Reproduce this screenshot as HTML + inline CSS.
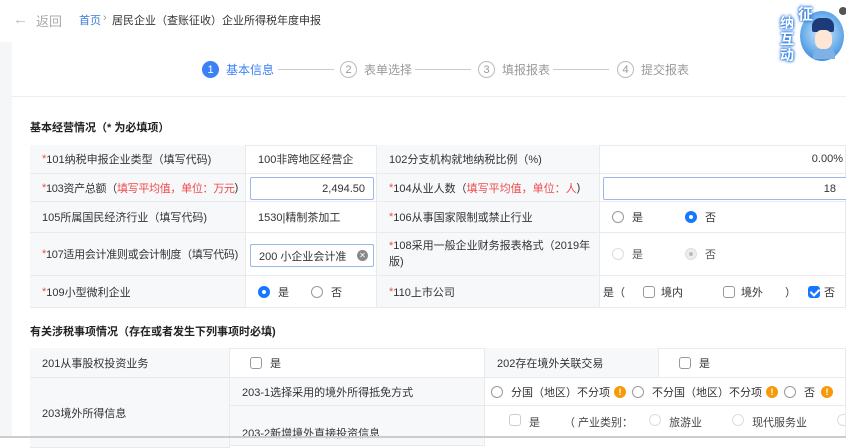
<!DOCTYPE html>
<html><head><meta charset="utf-8"><style>
*{margin:0;padding:0;box-sizing:border-box}
body{width:846px;height:438px;overflow:hidden;background:#fff;font-family:"Liberation Sans","Noto Sans CJK SC",sans-serif;font-size:12px;color:#333;position:relative}
.a{position:absolute}
.c{position:absolute;border-right:1px solid #e8eaed;border-bottom:1px solid #e8eaed;display:flex;align-items:center;padding-left:12px;font-size:11px;color:#333;white-space:nowrap;overflow:hidden}
.l{background:#f7f8fa}
.r{color:#f04a4a}
.rad,.cb,.warn{flex-shrink:0}
.rad{display:inline-block;width:12px;height:12px;border:1px solid #999;border-radius:50%;vertical-align:middle;margin-right:8px;position:relative}
.rad.on{border:4px solid #1677ff;background:#fff}
.rad.dis{border-color:#ddd}
.rad.disOn{border-color:#ddd;background:#eee}
.rad.disOn:after{content:"";position:absolute;left:3px;top:3px;width:4px;height:4px;border-radius:50%;background:#bbb}
.cb{display:inline-block;width:12px;height:12px;border:1px solid #999;border-radius:3px;vertical-align:middle;margin-right:8px}
.cb.dis{border-color:#ccc}
.cb.on{background:#1677ff;border-color:#1677ff;position:relative}
.cb.on:after{content:"";position:absolute;left:3px;top:0px;width:4px;height:7px;border:solid #fff;border-width:0 2px 2px 0;transform:rotate(45deg)}
.warn{display:inline-block;width:12px;height:12px;border-radius:50%;background:#f59a0b;color:#fff;font-size:9px;font-weight:bold;text-align:center;line-height:12px;vertical-align:middle}
.step{position:absolute;top:61px;font-size:12px;color:#999;display:flex;align-items:center}
.num{width:17px;height:17px;border-radius:50%;border:1px solid #bbb;color:#999;font-size:11px;display:flex;align-items:center;justify-content:center;margin-right:7px}
.line{position:absolute;top:69px;height:1px;background:#ccc}
.inp{position:absolute;border:1px solid #9ab8e8;border-radius:2px;height:23px;background:#fff;font-size:11px;display:flex;align-items:center}
</style></head><body>
<div class="a" style="left:0;top:42px;width:12px;height:396px;background:#f5f6f8"></div>
<div class="a" style="left:12px;top:96px;width:834px;height:1px;background:#eceef0"></div>
<!-- header -->
<div class="a" style="left:13px;top:11px;font-size:15px;color:#bbb">←</div>
<div class="a" style="left:36px;top:11px;font-size:13px;color:#aaa">返回</div>
<div class="a" style="left:79px;top:12px;font-size:11px;color:#3a7bd5">首页</div>
<div class="a" style="left:103px;top:12px;font-size:11px;color:#999">›</div>
<div class="a" style="left:112px;top:12px;font-size:11px;color:#333">居民企业（查账征收）企业所得税年度申报</div>
<!-- avatar -->
<div class="a" style="left:800px;top:11px;width:44px;height:50px;border-radius:50%;background:radial-gradient(circle at 50% 45%,#d6eeff,#3a8fe0 80%);"></div>
<div class="a" style="left:812px;top:18px;width:22px;height:14px;background:#1d3b7a;border-radius:8px 8px 2px 2px"></div>
<div class="a" style="left:815px;top:30px;width:17px;height:19px;background:#fde7d4;border-radius:40%"></div>
<div class="a" style="left:813px;top:49px;width:22px;height:10px;background:#7fb0e6;border-radius:6px 6px 0 0"></div>
<div class="a" style="left:798px;top:3px;color:#fff;font-size:15px;font-weight:bold;text-shadow:0 0 3px #2a7be0,0 0 3px #2a7be0,0 0 2px #2a7be0">征</div>
<div class="a" style="left:780px;top:15px;color:#fff;font-size:14px;font-weight:bold;line-height:16px;width:16px;text-shadow:0 0 3px #2a7be0,0 0 3px #2a7be0,0 0 2px #2a7be0">纳<br>互<br>动</div>
<div class="a" style="left:839px;top:7px;width:8px;height:8px;border-radius:50%;background:#555"></div>
<!-- steps -->
<div class="step" style="left:202px"><div class="num" style="background:#3b82f6;border-color:#3b82f6;color:#fff">1</div><span style="color:#3b82f6">基本信息</span></div>
<div class="line" style="left:278px;width:56px"></div>
<div class="step" style="left:340px"><div class="num">2</div>表单选择</div>
<div class="line" style="left:415px;width:56px"></div>
<div class="step" style="left:478px"><div class="num">3</div>填报报表</div>
<div class="line" style="left:553px;width:56px"></div>
<div class="step" style="left:617px"><div class="num">4</div>提交报表</div>
<div class="a" style="left:30px;top:119px;font-size:11px;font-weight:bold;color:#222">基本经营情况（* 为必填项）</div>
<!-- table1 -->
<div class="a" style="left:30px;top:145px;width:816px;height:163px;border-top:1px solid #e8eaed;border-left:1px solid #e8eaed"></div>
<div class="c l" style="left:30px;top:145px;width:216px;height:29px"><span class="r">*</span>101纳税申报企业类型（填写代码)</div>
<div class="c" style="left:246px;top:145px;width:131px;height:29px">100非跨地区经营企</div>
<div class="c l" style="left:377px;top:145px;width:223px;height:29px">102分支机构就地纳税比例（%)</div>
<div class="c" style="left:600px;top:145px;width:246px;height:29px;justify-content:flex-end;padding-right:2px">0.00%</div>

<div class="c l" style="left:30px;top:174px;width:216px;height:28px;letter-spacing:-0.3px"><span class="r">*</span>103资产总额（<span class="r">填写平均值，单位：万元</span>)</div>
<div class="c" style="left:246px;top:174px;width:131px;height:28px"></div>
<div class="inp" style="left:250px;top:177px;width:124px;justify-content:flex-end;padding-right:8px">2,494.50</div>
<div class="c l" style="left:377px;top:174px;width:223px;height:28px"><span class="r">*</span>104从业人数（<span class="r">填写平均值，单位：人</span>)</div>
<div class="c" style="left:600px;top:174px;width:246px;height:28px"></div>
<div class="inp" style="left:603px;top:177px;width:250px;justify-content:flex-end;padding-right:16px">18</div>

<div class="c l" style="left:30px;top:202px;width:216px;height:31px">105所属国民经济行业（填写代码)</div>
<div class="c" style="left:246px;top:202px;width:131px;height:31px">1530|精制茶加工</div>
<div class="c l" style="left:377px;top:202px;width:223px;height:31px"><span class="r">*</span>106从事国家限制或禁止行业</div>
<div class="c" style="left:600px;top:202px;width:246px;height:31px;padding-left:12px"><span class="rad"></span>是<span class="rad on" style="margin-left:42px"></span>否</div>

<div class="c l" style="left:30px;top:233px;width:216px;height:43px;letter-spacing:-0.3px"><span class="r">*</span>107适用会计准则或会计制度（填写代码)</div>
<div class="c" style="left:246px;top:233px;width:131px;height:43px"></div>
<div class="inp" style="left:250px;top:244px;width:124px;padding-left:8px">200 小企业会计准<span style="position:absolute;right:5px;top:5px;width:11px;height:11px;border-radius:50%;background:#888;color:#fff;font-size:8px;line-height:11px;text-align:center">✕</span></div>
<div class="c l" style="left:377px;top:233px;width:223px;height:43px;white-space:normal;line-height:16px;padding-right:4px"><div><span class="r">*</span>108采用一般企业财务报表格式（2019年版)</div></div>
<div class="c" style="left:600px;top:233px;width:246px;height:43px;color:#555"><span class="rad dis"></span>是<span class="rad disOn" style="margin-left:42px"></span>否</div>

<div class="c l" style="left:30px;top:276px;width:216px;height:32px"><span class="r">*</span>109小型微利企业</div>
<div class="c" style="left:246px;top:276px;width:131px;height:32px"><span class="rad on"></span>是<span class="rad" style="margin-left:22px"></span>否</div>
<div class="c l" style="left:377px;top:276px;width:223px;height:32px"><span class="r">*</span>110上市公司</div>
<div class="c" style="left:600px;top:276px;width:246px;height:32px;padding-left:3px">是（<span class="cb" style="margin-left:18px;margin-right:6px"></span>境内<span class="cb" style="margin-left:40px;margin-right:6px"></span>境外<span style="margin-left:22px">）</span><span class="cb on" style="margin-left:12px;margin-right:4px"></span>否</div>

<div class="a" style="left:30px;top:323px;font-size:11px;font-weight:bold;color:#222">有关涉税事项情况（存在或者发生下列事项时必填)</div>
<!-- table2 -->
<div class="a" style="left:30px;top:348px;width:816px;height:90px;border-top:1px solid #e8eaed;border-left:1px solid #e8eaed"></div>
<div class="c l" style="left:30px;top:348px;width:200px;height:30px">201从事股权投资业务</div>
<div class="c" style="left:230px;top:348px;width:255px;height:30px;padding-left:20px"><span class="cb"></span>是</div>
<div class="c l" style="left:485px;top:348px;width:174px;height:30px">202存在境外关联交易</div>
<div class="c" style="left:659px;top:348px;width:187px;height:30px;padding-left:20px"><span class="cb"></span>是</div>
<div class="c l" style="left:30px;top:378px;width:200px;height:70px">203境外所得信息</div>
<div class="c l" style="left:230px;top:378px;width:255px;height:28px">203-1选择采用的境外所得抵免方式</div>
<div class="c" style="left:485px;top:378px;width:361px;height:28px;padding-left:6px"><span class="rad"></span>分国（地区）不分项 <span class="warn" style="margin-left:4px;margin-right:6px">!</span><span class="rad"></span>不分国（地区）不分项 <span class="warn" style="margin-left:4px;margin-right:6px">!</span><span class="rad"></span>否 <span class="warn" style="margin-left:6px">!</span></div>
<div class="c l" style="left:230px;top:406px;width:255px;height:40px;padding-top:14px">203-2新增境外直接投资信息</div>
<div class="c" style="left:485px;top:406px;width:361px;height:32px;align-items:flex-start;padding-top:8px;padding-left:24px;color:#444"><span class="cb dis"></span>是<span style="margin-left:24px">（ 产业类别：</span><span class="rad dis" style="margin-left:16px"></span>旅游业<span class="rad dis" style="margin-left:30px"></span>现代服务业<span class="rad dis" style="margin-left:30px"></span>高</div>
<div class="a" style="left:0;top:436px;width:846px;height:2px;background:#ccc"></div>
</body></html>
